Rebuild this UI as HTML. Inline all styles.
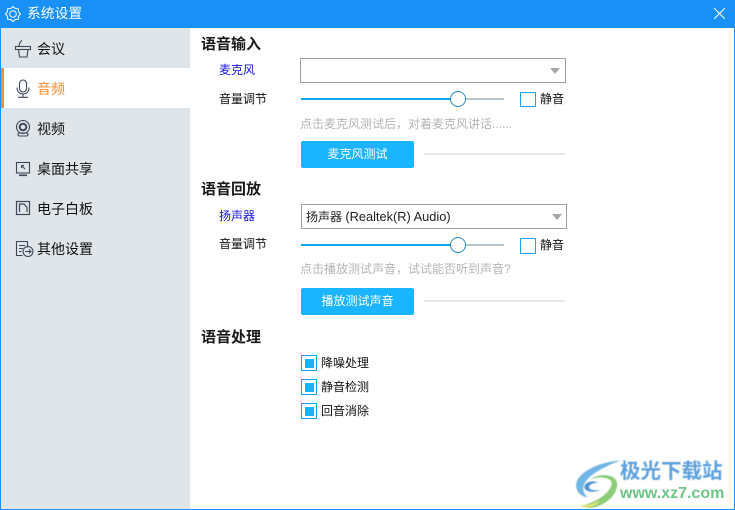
<!DOCTYPE html>
<html><head><meta charset="utf-8"><style>
html,body{margin:0;padding:0;background:#fff}
#r{position:relative;width:735px;height:510px;overflow:hidden;background:#fff;font-family:"Liberation Sans","Noto Sans CJK SC",sans-serif;font-size:12px;color:#111}
#r div,#r svg{position:absolute}
.t{white-space:nowrap;line-height:18px;height:18px}
.h{font-size:15px;font-weight:bold;color:#1a1a1a}
.g{color:#b4b4b4;font-size:12px}
.b{color:#1515e0;font-size:12px}
.s{font-size:14px;color:#222}
.sel{border:1px solid #a0a0a0;box-sizing:border-box;background:#fff}
.btn{background:#1ab4ff;color:#fff;text-align:center;border-radius:2px;line-height:27px;font-size:12px}
.c{width:16px;border:1px solid #13a6ef;box-sizing:border-box;background:#fff}
.c2{width:16px;height:16px;border:1px solid #13a6ef;box-sizing:border-box;background:#fff}
.c2 i{position:absolute;left:3px;top:3px;width:9px;height:9px;background:#1ab4ff;display:block}
</style></head><body><div id="r">
<div style="left:0;top:0;width:735px;height:28px;background:#1890f5"></div>
<div style="left:0;top:28px;width:1px;height:482px;background:#1890f5"></div>
<div style="right:0;top:28px;width:1px;height:482px;background:#1890f5"></div>
<div style="left:0;top:509px;width:735px;height:1px;background:#1890f5"></div>
<div style="left:1px;top:28px;width:189px;height:481px;background:#e0e5e9"></div>
<div style="left:1px;top:68px;width:189px;height:40px;background:#fff"></div>
<div style="left:1px;top:68px;width:3px;height:40px;background:#ff8c2e"></div>

<svg style="left:5px;top:6px" width="16" height="16" viewBox="0 0 16 16" fill="none" stroke="#fff" stroke-width="1" stroke-linejoin="round"><circle cx="8" cy="8" r="3.300"/><path d="M15.500 8L13.540 10.300 13.300 13.300 10.300 13.540 8 15.500 5.700 13.540 2.700 13.300 2.460 10.300 .5 8 2.460 5.700 2.700 2.700 5.700 2.460 8 .5 10.300 2.460 13.300 2.700 13.540 5.700z"/></svg>
<div class="t" style="left:27px;top:5px;color:#fff;font-size:13.800px">系统设置</div>
<svg style="left:714px;top:8px" width="11" height="11" viewBox="0 0 11 11" stroke="#fff" stroke-width="1"><path d="M0 0l11 11M11 0L0 11"/></svg>

<svg style="left:14px;top:39px" width="18" height="19" viewBox="0 0 18 19" fill="none" stroke="#3c4858" stroke-width="1.100"><rect x="1.500" y="7.500" width="15" height="3"/><path d="M4.500 10.500l1 7.500h7.500l1-7.500M5 7C5.300 4.500 6.500 2.500 8 1.500"/></svg>
<div class="t s" style="left:37px;top:40px;color:#111">会议</div>
<svg style="left:15px;top:79px" width="16" height="19" viewBox="0 0 16 19" fill="none" stroke="#3c4858" stroke-width="1.100"><rect x="4.500" y="1" width="7" height="12" rx="3.500"/><path d="M2 8.500c0 4 2.500 6.500 6 6.500s6-2.500 6-6.500M8 15v3M3 18.300h10"/></svg>
<div class="t s" style="left:37px;top:80px;color:#ff8c2e">音频</div>
<svg style="left:15px;top:120px" width="16" height="17" viewBox="0 0 16 17" fill="none" stroke="#3c4858" stroke-width="1.100"><circle cx="8" cy="7" r="6.500"/><circle cx="8" cy="7" r="3.300" stroke-width="2"/><rect x="3" y="13" width="10" height="3" rx="1.500"/></svg>
<div class="t s" style="left:37px;top:120px;color:#111">视频</div>
<svg style="left:15px;top:161px" width="16" height="16" viewBox="0 0 16 16" fill="none" stroke="#3c4858" stroke-width="1.100"><rect x="1.500" y="1.500" width="13" height="10.500"/><path d="M4 14.300h8" stroke-width="1.600"/><path d="M6.500 4.500l3.500 3.500M6.500 4.500h2.500M6.500 4.500V7"/></svg>
<div class="t s" style="left:37px;top:160px;color:#111">桌面共享</div>
<svg style="left:15px;top:200px" width="16" height="16" viewBox="0 0 16 16" fill="none" stroke="#3c4858" stroke-width="1.200"><rect x="1.500" y="1.500" width="13" height="13"/><path d="M4.500 12V4h4.500l3 3.500V12"/></svg>
<div class="t s" style="left:37px;top:200px;color:#111">电子白板</div>
<svg style="left:15px;top:240px" width="19" height="18" viewBox="0 0 19 18" fill="none" stroke="#3c4858" stroke-width="1.100"><path d="M7.500 15.500h-6V1.500h11v6M4 5.500h6M4 8.500h4M4 11.500h2.500"/><circle cx="13" cy="11.500" r="5"/><path d="M10 11.500h6M14 9.500l2 2-2 2"/></svg>
<div class="t s" style="left:37px;top:240px;color:#111">其他设置</div>

<div class="t h" style="left:201px;top:36px">语音输入</div>
<div class="t b" style="left:219px;top:61px">麦克风</div>
<div class="sel" style="left:300px;top:58px;width:266px;height:25px"></div>
<svg style="left:550px;top:68px" width="10" height="6"><path d="M0 0h10L5 6z" fill="#a8a8a8"/></svg>
<div class="t" style="left:219px;top:90px">音量调节</div>
<div style="left:301px;top:98px;width:203px;height:2px;background:#b8c4ce"></div>
<div style="left:301px;top:98px;width:157px;height:2px;background:#0ba5ec"></div>
<div style="left:450px;top:91px;width:16px;height:16px;border:1px solid #2c88c4;border-radius:50%;background:#fff;box-sizing:border-box"></div>
<div class="c" style="left:520px;top:92px;height:15px"></div>
<div class="t" style="left:540px;top:90px">静音</div>
<div class="t g" style="left:300px;top:115px">点击麦克风测试后，对着麦克风讲话......</div>
<div class="btn" style="left:301px;top:141px;width:113px;height:27px">麦克风测试</div>
<div style="left:424px;top:153px;width:141px;height:2px;background:#e4e8ea"></div>

<div class="t h" style="left:201px;top:181px">语音回放</div>
<div class="t b" style="left:219px;top:207px">扬声器</div>
<div class="sel" style="left:301px;top:204px;width:266px;height:25px"></div>
<div class="t" style="left:306px;top:208px;font-size:12px;color:#222">扬声器 <span style="font-size:12.800px">(Realtek(R) Audio)</span></div>
<svg style="left:552px;top:214px" width="10" height="6"><path d="M0 0h10L5 6z" fill="#a8a8a8"/></svg>
<div class="t" style="left:219px;top:235px">音量调节</div>
<div style="left:301px;top:244px;width:203px;height:2px;background:#b8c4ce"></div>
<div style="left:301px;top:244px;width:157px;height:2px;background:#0ba5ec"></div>
<div style="left:450px;top:237px;width:16px;height:16px;border:1px solid #2c88c4;border-radius:50%;background:#fff;box-sizing:border-box"></div>
<div class="c" style="left:520px;top:238px;height:16px"></div>
<div class="t" style="left:540px;top:236px">静音</div>
<div class="t g" style="left:300px;top:260px">点击播放测试声音，试试能否听到声音?</div>
<div class="btn" style="left:301px;top:288px;width:113px;height:27px">播放测试声音</div>
<div style="left:424px;top:300px;width:141px;height:2px;background:#e4e8ea"></div>

<div class="t h" style="left:201px;top:329px">语音处理</div>
<div class="c2" style="left:301px;top:355px"><i></i></div>
<div class="t" style="left:321px;top:354px">降噪处理</div>
<div class="c2" style="left:301px;top:379px"><i></i></div>
<div class="t" style="left:321px;top:378px">静音检测</div>
<div class="c2" style="left:301px;top:403px"><i></i></div>
<div class="t" style="left:321px;top:402px">回音消除</div>

<svg style="left:565px;top:440px;filter:blur(.6px)" width="170" height="70" viewBox="0 0 510 210"><path d="M165 62C110 65 50 90 35 125C28 150 45 170 68 172C50 155 50 135 70 115C90 95 130 75 165 62z" fill="#6fb5e6"/><path d="M100 128C80 118 58 128 58 142C60 155 85 160 105 150C90 152 72 150 72 142C72 134 85 128 100 128z" fill="#4e94cf"/><path d="M75 118C100 108 140 112 140 130C138 155 100 185 48 198C60 206 85 205 100 198C135 185 160 155 156 128C150 100 100 100 75 118z" fill="#8ccc78"/><path d="M45 195C60 198 85 192 105 182C95 200 60 210 45 195z" fill="#e6e27a"/></svg>
<div class="t" style="left:620px;top:459px;font-size:20.500px;font-weight:bold;color:#5b9fdc;line-height:26px;height:26px;filter:blur(.4px)">极光下载站</div>
<div class="t" style="left:620px;top:484px;font-size:16px;font-weight:bold;color:#6fc487;line-height:20px;height:20px;filter:blur(.3px)">www.xz7.com</div>
</div></body></html>
